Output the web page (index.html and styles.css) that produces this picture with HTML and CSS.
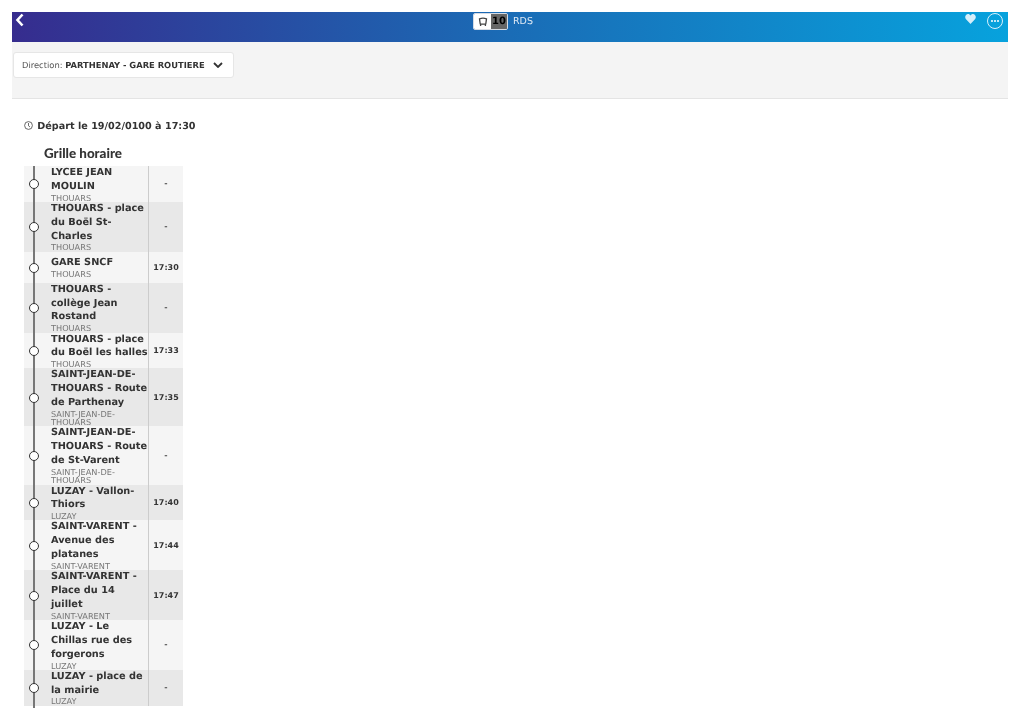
FILE: index.html
```html
<!DOCTYPE html>
<html lang="fr">
<head>
    <meta charset="UTF-8">
    <title>Grille horaire</title>
    <link rel="stylesheet" href="styles.css">
</head>
<body>
    <div class="app">
        <header class="topbar">
            <svg class="back" width="10" height="14" viewBox="0 0 10 14"><path d="M7.5 1.5 L2.5 7 L7.5 12.5" fill="none" stroke="#fff" stroke-width="2.6"/></svg>
            <div class="line-info">
                <div class="badge">
                    <span class="badge-icon">
                        <svg width="10" height="10" viewBox="0 0 10 10"><path d="M1.5 1.8 Q5 0.4 8.5 1.8 L7.8 6.8 Q5 7.6 2.2 6.8 Z" fill="none" stroke="#444" stroke-width="1.3"/><path d="M2.6 7 L2.6 9 M7.4 7 L7.4 9" stroke="#444" stroke-width="1.3"/></svg>
                    </span>
                    <span class="badge-num">10</span>
                </div>
                <span class="line-name">RDS</span>
            </div>
            <div class="top-actions">
                <svg width="11" height="10" viewBox="0 0 11 10"><path d="M5.5 10 L0.8 5 C-0.8 2.6 1 0 3 0 C4.2 0 5 0.6 5.5 1.5 C6 0.6 6.8 0 8 0 C10 0 11.8 2.6 10.2 5 Z" fill="#d5eefa"/></svg>
                <span class="more"><i></i><i></i><i></i></span>
            </div>
        </header>

        <div class="filter-bar">
            <div class="direction">
                <span>Direction: <b>PARTHENAY - GARE ROUTIERE</b></span>
                <svg width="10" height="6" viewBox="0 0 10 6"><path d="M1 1 L5 5 L9 1" fill="none" stroke="#333" stroke-width="1.8"/></svg>
            </div>
        </div>

        <div class="content">
            <p class="depart">
                <svg width="9" height="9" viewBox="0 0 9 9"><circle cx="4.5" cy="4.5" r="3.9" fill="none" stroke="#444" stroke-width="0.8"/><path d="M4.5 2 V4.8 L6 6" fill="none" stroke="#444" stroke-width="0.8"/></svg>
                Départ le 19/02/0100 à 17:30
            </p>
            <h2>Grille horaire</h2>

            <div class="stops">
                <div class="stop">
                    <div class="rail"><span class="dot"></span></div>
                    <div class="stop-info"><div class="name">LYCEE JEAN MOULIN</div><div class="town">THOUARS</div></div>
                    <div class="time muted">-</div>
                </div>
                <div class="stop">
                    <div class="rail"><span class="dot"></span></div>
                    <div class="stop-info"><div class="name">THOUARS - place du Boël St-Charles</div><div class="town">THOUARS</div></div>
                    <div class="time muted">-</div>
                </div>
                <div class="stop single">
                    <div class="rail"><span class="dot"></span></div>
                    <div class="stop-info"><div class="name">GARE SNCF</div><div class="town">THOUARS</div></div>
                    <div class="time">17:30</div>
                </div>
                <div class="stop">
                    <div class="rail"><span class="dot"></span></div>
                    <div class="stop-info"><div class="name">THOUARS - collège Jean Rostand</div><div class="town">THOUARS</div></div>
                    <div class="time muted">-</div>
                </div>
                <div class="stop">
                    <div class="rail"><span class="dot"></span></div>
                    <div class="stop-info"><div class="name">THOUARS - place du Boël les halles</div><div class="town">THOUARS</div></div>
                    <div class="time">17:33</div>
                </div>
                <div class="stop">
                    <div class="rail"><span class="dot"></span></div>
                    <div class="stop-info"><div class="name">SAINT-JEAN-DE-THOUARS - Route de Parthenay</div><div class="town">SAINT-JEAN-DE-THOUARS</div></div>
                    <div class="time">17:35</div>
                </div>
                <div class="stop">
                    <div class="rail"><span class="dot"></span></div>
                    <div class="stop-info"><div class="name">SAINT-JEAN-DE-THOUARS - Route de St-Varent</div><div class="town">SAINT-JEAN-DE-THOUARS</div></div>
                    <div class="time muted">-</div>
                </div>
                <div class="stop">
                    <div class="rail"><span class="dot"></span></div>
                    <div class="stop-info"><div class="name">LUZAY - Vallon-Thiors</div><div class="town">LUZAY</div></div>
                    <div class="time">17:40</div>
                </div>
                <div class="stop">
                    <div class="rail"><span class="dot"></span></div>
                    <div class="stop-info"><div class="name">SAINT-VARENT - Avenue des platanes</div><div class="town">SAINT-VARENT</div></div>
                    <div class="time">17:44</div>
                </div>
                <div class="stop">
                    <div class="rail"><span class="dot"></span></div>
                    <div class="stop-info"><div class="name">SAINT-VARENT - Place du 14 juillet</div><div class="town">SAINT-VARENT</div></div>
                    <div class="time">17:47</div>
                </div>
                <div class="stop">
                    <div class="rail"><span class="dot"></span></div>
                    <div class="stop-info"><div class="name">LUZAY - Le Chillas rue des forgerons</div><div class="town">LUZAY</div></div>
                    <div class="time muted">-</div>
                </div>
                <div class="stop">
                    <div class="rail"><span class="dot"></span></div>
                    <div class="stop-info"><div class="name">LUZAY - place de la mairie</div><div class="town">LUZAY</div></div>
                    <div class="time muted">-</div>
                </div>
                <div class="rail rail-end"></div>
            </div>
        </div>
    </div>
</body>
</html>
```

FILE: styles.css
```css
* {
    margin: 0;
    padding: 0;
    box-sizing: border-box;
}

html,
body {
    height: 720px;
    overflow: hidden;
}

body {
    font-family: "DejaVu Sans", sans-serif;
    background: #fff;
    color: #333;
    padding: 12px;
    text-rendering: geometricPrecision;
}

.app {
    height: 696px;
    overflow: hidden;
    will-change: transform;
}

.topbar {
    height: 30px;
    background: linear-gradient(90deg, #362c8e 0%, #1a6cb6 50%, #07a2dd 100%);
    display: flex;
    justify-content: space-between;
    position: relative;
    padding: 0 5px 0 3px;
    color: #fff;
}

.back {
    margin-top: 1px;
}

.line-info {
    position: absolute;
    left: 461px;
    top: 1px;
    display: flex;
    align-items: center;
    gap: 5px;
}

.badge {
    display: flex;
    height: 17px;
    border-radius: 2px;
    overflow: hidden;
    border: 1px solid #d5dbe4;
}

.badge-icon {
    width: 17px;
    background: #fff;
    display: flex;
    align-items: center;
    justify-content: center;
}

.badge-num {
    width: 16px;
    background: #666;
    color: #000;
    font-size: 10px;
    font-weight: bold;
    line-height: 15px;
    text-align: center;
}

.line-name {
    font-size: 9.5px;
    color: #dfeaf5;
}

.top-actions {
    display: flex;
    align-items: flex-start;
    gap: 11px;
    padding-top: 1px;
}

.top-actions svg {
    margin-top: 1px;
}

.more {
    width: 16px;
    height: 16px;
    border: 1.2px solid #d8f0fb;
    border-radius: 50%;
    display: flex;
    align-items: center;
    justify-content: center;
    gap: 1px;
}

.more i {
    width: 2px;
    height: 2px;
    background: #fff;
    border-radius: 50%;
}

.filter-bar {
    height: 57px;
    background: #f4f4f4;
    border-bottom: 1px solid #e4e4e4;
    padding: 10px 1px;
}

.direction {
    width: 221px;
    height: 26px;
    background: #fff;
    border: 1px solid #e6e6e6;
    border-radius: 3px;
    display: flex;
    align-items: center;
    justify-content: space-between;
    padding: 0 10px 0 8px;
    font-size: 8.35px;
    color: #555;
}

.direction b {
    color: #333;
}

.content {
    padding: 22px 12px 0;
}

.depart {
    font-size: 9.65px;
    font-weight: bold;
    line-height: 12px;
    color: #333;
}

.depart svg {
    vertical-align: -1px;
    margin-right: 1px;
}

h2 {
    font-family: Lato, sans-serif;
    font-size: 13.4px;
    font-weight: 900;
    line-height: 15px;
    margin: 13px 0 5px 20px;
    color: #333;
}

.stops {
    width: 159px;
}

.stop {
    display: flex;
    background: #f5f5f5;
}

.stop:nth-child(even) {
    background: #e8e8e8;
}

.single {
    min-height: 31px;
}

.rail {
    width: 27px;
    flex-shrink: 0;
    position: relative;
    display: flex;
    align-items: center;
    justify-content: center;
    padding-right: 7px;
}

.rail::before {
    content: "";
    position: absolute;
    top: 0;
    bottom: 0;
    left: 9px;
    width: 1.5px;
    background: #777;
}

.rail-end {
    height: 20px;
}

.dot {
    width: 10px;
    height: 10px;
    margin-top: 1px;
    border: 1.5px solid #333;
    border-radius: 50%;
    background: #fff;
    position: relative;
}

.stop-info {
    width: 97px;
    flex-shrink: 0;
    align-self: center;
}

.name {
    font-size: 9.75px;
    font-weight: bold;
    line-height: 13.85px;
    color: #333;
}

.town {
    font-size: 8.2px;
    line-height: 8.25px;
    color: #777;
}

.time {
    flex: 1;
    border-left: 1px solid #ccc;
    font-size: 8px;
    font-weight: bold;
    display: flex;
    align-items: center;
    justify-content: center;
    color: #333;
}

.muted {
    color: #555;
}
```
